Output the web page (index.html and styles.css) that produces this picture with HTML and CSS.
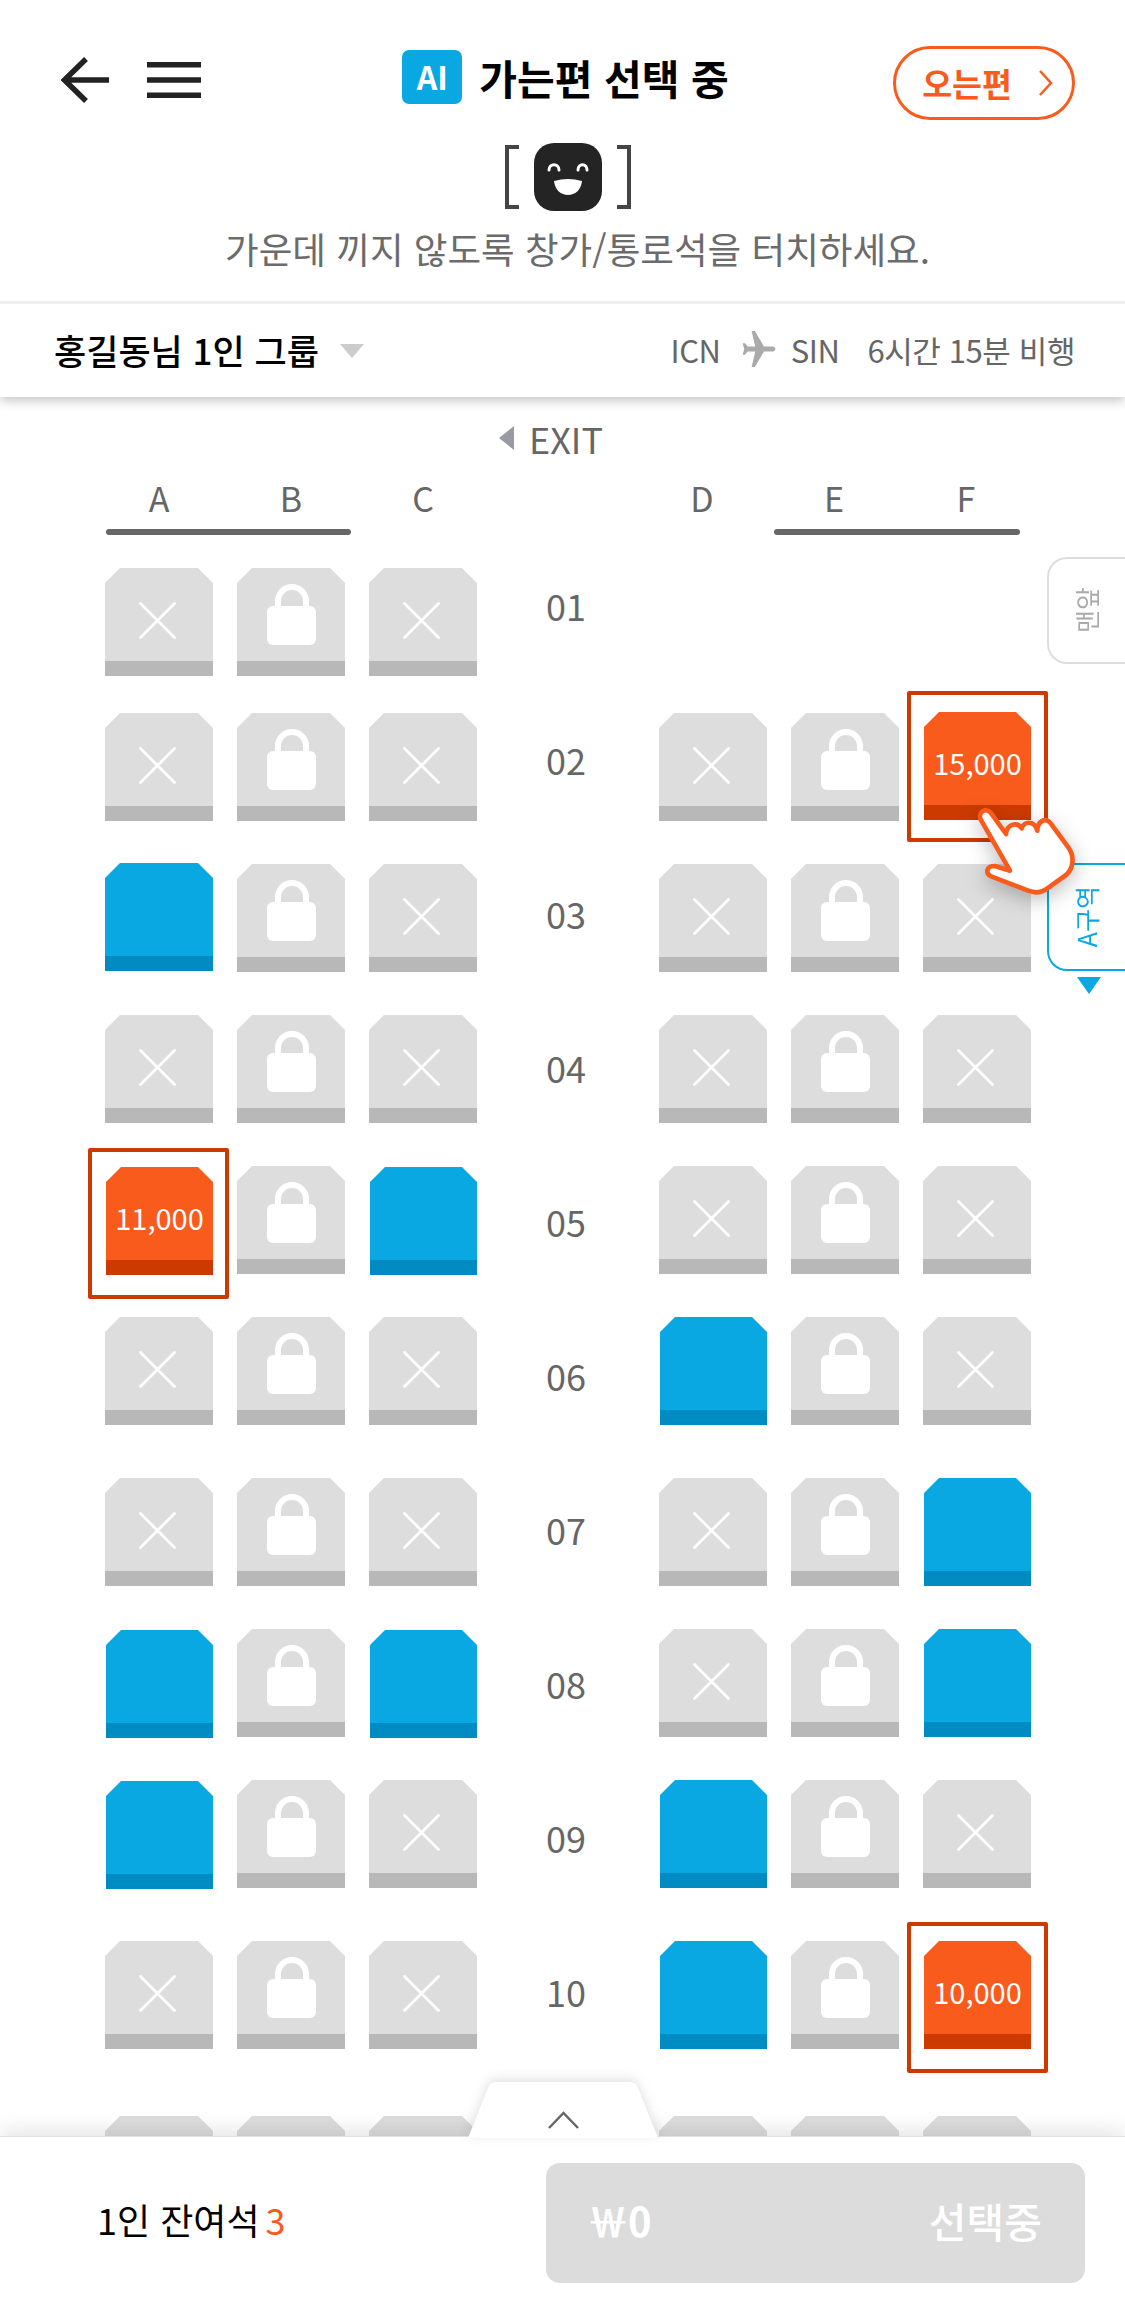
FILE: index.html
```html
<!DOCTYPE html>
<html lang="ko">
<head>
<meta charset="utf-8">
<title>좌석 선택</title>
<link rel="stylesheet" href="styles.css">
</head>
<body>
<svg class="defs" width="0" height="0" aria-hidden="true">
  <symbol id="i-x" viewBox="0 0 108 108"><path d="M35.5 35.5L69.5 69.5M69.5 35.5L35.5 69.5" fill="none" stroke="#fff" stroke-width="2.8" stroke-linecap="round"/></symbol>
  <symbol id="i-lock" viewBox="0 0 108 108"><path d="M41 40V33A14 14 0 0 1 69 33V40" fill="none" stroke="#fff" stroke-width="6"/><rect x="30" y="38" width="49" height="39" rx="6" fill="#fff"/></symbol>
</svg>
<div class="page">
  <header class="head">
    <div class="topbar">
      <div class="nav-icons">
        <svg class="icon-back" width="48" height="46" viewBox="0 0 48 46"><path d="M25 2L3.500 23L25 44M3.500 23H48" fill="none" stroke="#222" stroke-width="5.500"/></svg>
        <svg class="icon-menu" width="54" height="36" viewBox="0 0 54 36"><path d="M0 2.750H54M0 18H54M0 33.250H54" stroke="#222" stroke-width="5.500"/></svg>
      </div>
      <div class="title">
        <span class="ai-badge">AI</span>
        <h1 class="title-text">가는편 선택 중</h1>
      </div>
      <button class="return-btn">
        <span>오는편</span>
        <svg width="15" height="26" viewBox="0 0 15 26"><path d="M2 1L13 13L2 25" fill="none" stroke="#f95b1c" stroke-width="2.500"/></svg>
      </button>
    </div>
    <div class="mascot">
      <svg width="126" height="68" viewBox="0 0 126 68">
        <path d="M14 4H2V64H14M112 4H124V64H112" fill="none" stroke="#444" stroke-width="4"/>
        <rect x="29" width="68" height="68" rx="20" fill="#242424"/>
        <path d="M44 27C44 20 54 20 54 27M73 27C73 20 82 20 82 27" fill="none" stroke="#fff" stroke-width="3" stroke-linecap="round"/>
        <path d="M49 38Q63 34 77 38C76 47 70 52 63 52C56 52 50 47 49 38Z" fill="#fff"/>
      </svg>
    </div>
    <p class="hint">가운데 끼지 않도록 창가/통로석을 터치하세요.</p>
    <div class="group-row">
      <div class="group-name">홍길동님 1인 그룹<i class="caret"></i></div>
      <div class="flight">
        <span>ICN</span>
        <svg class="plane" width="36" height="36" viewBox="1.500 1 21 22"><path d="M22 12c0-.8-.7-1.500-1.500-1.500H15L9.500 1H7.500l2.200 9.500H5L3.500 8.500H2l1 3.500-1 3.500h1.500L5 13.500h4.700L7.500 23h2L15 13.500h5.500c.8 0 1.500-.7 1.500-1.500z" fill="#aaa"/></svg>
        <span>SIN</span>
        <span class="duration">6시간 15분 비행</span>
      </div>
    </div>
  </header>

  <main class="cabin">
    <div class="exit"><i class="exit-arrow"></i>EXIT</div>
    <div class="col-letters">
      <div class="col-group"><span>A</span><span>B</span><span>C</span></div>
      <div class="col-group"><span>D</span><span>E</span><span>F</span></div>
    </div>
    <div class="col-rules"><i class="rule"></i><i class="rule rule--right"></i></div>

    <div class="seat-map">
      <div class="block">
        <div class="row">
          <div class="seat"><svg class="seat-icon"><use href="#i-x"/></svg></div>
          <div class="seat"><svg class="seat-icon"><use href="#i-lock"/></svg></div>
          <div class="seat"><svg class="seat-icon"><use href="#i-x"/></svg></div>
        </div>
        <div class="row row--tight">
          <div class="seat"><svg class="seat-icon"><use href="#i-x"/></svg></div>
          <div class="seat"><svg class="seat-icon"><use href="#i-lock"/></svg></div>
          <div class="seat"><svg class="seat-icon"><use href="#i-x"/></svg></div>
        </div>
        <div class="row">
          <div class="seat seat--open seat--full nudge-up"></div>
          <div class="seat"><svg class="seat-icon"><use href="#i-lock"/></svg></div>
          <div class="seat"><svg class="seat-icon"><use href="#i-x"/></svg></div>
        </div>
        <div class="row">
          <div class="seat"><svg class="seat-icon"><use href="#i-x"/></svg></div>
          <div class="seat"><svg class="seat-icon"><use href="#i-lock"/></svg></div>
          <div class="seat"><svg class="seat-icon"><use href="#i-x"/></svg></div>
        </div>
        <div class="row">
          <div class="seat seat--selected nudge-down frame-left"><span class="seat-price">11,000</span></div>
          <div class="seat"><svg class="seat-icon"><use href="#i-lock"/></svg></div>
          <div class="seat seat--open nudge-down"></div>
        </div>
        <div class="row">
          <div class="seat"><svg class="seat-icon"><use href="#i-x"/></svg></div>
          <div class="seat"><svg class="seat-icon"><use href="#i-lock"/></svg></div>
          <div class="seat"><svg class="seat-icon"><use href="#i-x"/></svg></div>
        </div>
        <div class="row row--wide">
          <div class="seat"><svg class="seat-icon"><use href="#i-x"/></svg></div>
          <div class="seat"><svg class="seat-icon"><use href="#i-lock"/></svg></div>
          <div class="seat"><svg class="seat-icon"><use href="#i-x"/></svg></div>
        </div>
        <div class="row">
          <div class="seat seat--open nudge-down"></div>
          <div class="seat"><svg class="seat-icon"><use href="#i-lock"/></svg></div>
          <div class="seat seat--open nudge-down"></div>
        </div>
        <div class="row">
          <div class="seat seat--open nudge-down"></div>
          <div class="seat"><svg class="seat-icon"><use href="#i-lock"/></svg></div>
          <div class="seat"><svg class="seat-icon"><use href="#i-x"/></svg></div>
        </div>
        <div class="row row--wide">
          <div class="seat"><svg class="seat-icon"><use href="#i-x"/></svg></div>
          <div class="seat"><svg class="seat-icon"><use href="#i-lock"/></svg></div>
          <div class="seat"><svg class="seat-icon"><use href="#i-x"/></svg></div>
        </div>
        <div class="row row--peek"><div class="seat"></div><div class="seat"></div><div class="seat"></div></div>
      </div>

      <div class="row-labels">
        <span>01</span><span>02</span><span>03</span><span>04</span><span>05</span>
        <span>06</span><span>07</span><span>08</span><span>09</span><span>10</span>
      </div>

      <div class="block">
        <div class="row"></div>
        <div class="row row--tight">
          <div class="seat"><svg class="seat-icon"><use href="#i-x"/></svg></div>
          <div class="seat"><svg class="seat-icon"><use href="#i-lock"/></svg></div>
          <div class="seat seat--selected nudge-up frame-high"><span class="seat-price">15,000</span></div>
        </div>
        <div class="row">
          <div class="seat"><svg class="seat-icon"><use href="#i-x"/></svg></div>
          <div class="seat"><svg class="seat-icon"><use href="#i-lock"/></svg></div>
          <div class="seat"><svg class="seat-icon"><use href="#i-x"/></svg></div>
        </div>
        <div class="row">
          <div class="seat"><svg class="seat-icon"><use href="#i-x"/></svg></div>
          <div class="seat"><svg class="seat-icon"><use href="#i-lock"/></svg></div>
          <div class="seat"><svg class="seat-icon"><use href="#i-x"/></svg></div>
        </div>
        <div class="row">
          <div class="seat"><svg class="seat-icon"><use href="#i-x"/></svg></div>
          <div class="seat"><svg class="seat-icon"><use href="#i-lock"/></svg></div>
          <div class="seat"><svg class="seat-icon"><use href="#i-x"/></svg></div>
        </div>
        <div class="row">
          <div class="seat seat--open"></div>
          <div class="seat"><svg class="seat-icon"><use href="#i-lock"/></svg></div>
          <div class="seat"><svg class="seat-icon"><use href="#i-x"/></svg></div>
        </div>
        <div class="row row--wide">
          <div class="seat"><svg class="seat-icon"><use href="#i-x"/></svg></div>
          <div class="seat"><svg class="seat-icon"><use href="#i-lock"/></svg></div>
          <div class="seat seat--open"></div>
        </div>
        <div class="row">
          <div class="seat"><svg class="seat-icon"><use href="#i-x"/></svg></div>
          <div class="seat"><svg class="seat-icon"><use href="#i-lock"/></svg></div>
          <div class="seat seat--open"></div>
        </div>
        <div class="row">
          <div class="seat seat--open"></div>
          <div class="seat"><svg class="seat-icon"><use href="#i-lock"/></svg></div>
          <div class="seat"><svg class="seat-icon"><use href="#i-x"/></svg></div>
        </div>
        <div class="row row--wide">
          <div class="seat seat--open"></div>
          <div class="seat"><svg class="seat-icon"><use href="#i-lock"/></svg></div>
          <div class="seat seat--selected"><span class="seat-price">10,000</span></div>
        </div>
        <div class="row row--peek"><div class="seat"></div><div class="seat"></div><div class="seat"></div></div>
      </div>
    </div>
  </main>

  <div class="zone-tab zone-tab--front"><span>맨앞</span></div>
  <div class="zone-tab zone-tab--active"><span>A구역</span></div>
  <i class="zone-arrow"></i>

  <svg class="hand" width="165" height="150" viewBox="0 0 495 450">
    <path d="M150 332L64 182C50 160 75 140 92 158L138 222C140 195 170 182 185 205C190 185 222 178 232 212C232 185 255 170 272 190L325 262C345 290 340 325 318 345L262 385C245 398 225 400 205 392L95 350C75 340 78 318 105 318Z" fill="#fff" stroke="#f95b1c" stroke-width="14" stroke-linejoin="round"/>
  </svg>

  <footer class="footer">
    <svg class="footer-tab" width="190" height="56" viewBox="0 0 190 56">
      <path d="M0 56L20 6Q22 0 28 0H162Q168 0 170 6L190 56Z" fill="#fff"/>
      <path d="M81 46L95.500 31L110 46" fill="none" stroke="#666" stroke-width="2.500"/>
    </svg>
    <div class="remain">1인 잔여석<b class="remain-count">3</b></div>
    <button class="pay-btn"><span class="pay-price">￦0</span><span class="pay-label">선택중</span></button>
  </footer>
</div>
</body>
</html>
```

FILE: styles.css
```css
* { box-sizing: border-box; }
html, body { margin: 0; padding: 0; background: #fff; }
body { font-family: "Noto Sans CJK KR", "Noto Sans", sans-serif; color: #000; }
.defs { position: absolute; }
.page { position: relative; height: 2306px; overflow: hidden; background: #fff; }

/* header */
.head { position: relative; z-index: 3; background: #fff; box-shadow: 0 4px 10px rgba(0, 0, 0, .22); }
.topbar { display: grid; grid-template-columns: 1fr auto 1fr; align-items: start; padding: 46px 55px 0 61px; height: 119px; }
.nav-icons { display: flex; align-items: flex-start; gap: 38px; }
.icon-back { margin-top: 11px; }
.icon-menu { margin-top: 16px; }
.title { display: flex; align-items: center; gap: 17px; margin-top: 4px; }
.ai-badge { width: 60px; height: 54px; border-radius: 7px; background: #0aa8e2; color: #fff; font-size: 32px; font-weight: 700; line-height: 52px; text-align: center; }
.title-text { margin: 0; font-size: 41px; font-weight: 700; line-height: 54px; white-space: nowrap; }
.return-btn { justify-self: end; display: flex; align-items: center; justify-content: center; gap: 26px; width: 182px; height: 74px; margin-right: -5px; padding: 0 0 0 7px; border: 3px solid #f95b1c; border-radius: 37px; background: #fff; color: #f95b1c; font: 700 32.500px/1 "Noto Sans CJK KR", sans-serif; }
.mascot { display: flex; justify-content: center; margin-top: 24px; padding-left: 11px; }
.mascot svg { display: block; }
.hint { margin: 13px 0 0; padding-left: 30px; color: #6b6b6b; font-size: 36.6px; line-height: 50px; text-align: center; white-space: nowrap; }
.group-row { display: flex; align-items: center; justify-content: space-between; height: 96px; margin-top: 27px; padding: 0 50px 3px 54px; border-top: 3px solid #eee; }
.group-name { display: flex; align-items: center; font-size: 35px; font-weight: 500; }
.caret { width: 0; height: 0; margin: 3px 0 0 21px; border-style: solid; border-width: 14px 12px 0; border-color: #ccc transparent transparent; }
.flight { display: flex; align-items: center; color: #666; font-size: 31px; letter-spacing: -.4px; }
.plane { margin: 0 14px 0 20px; }
.duration { margin-left: 28px; }

/* cabin */
.cabin { position: relative; }
.exit { display: flex; align-items: center; justify-content: center; height: 40px; margin-top: 21px; padding-right: 23px; color: #666; font-size: 36px; line-height: 40px; }
.exit-arrow { width: 0; height: 0; margin-right: 15px; border-style: solid; border-width: 12px 15px 12px 0; border-color: transparent #9a9aa5 transparent transparent; }
.col-letters { display: flex; gap: 147px; margin-top: 20px; padding-left: 93px; color: #666; font-size: 34px; line-height: 40px; }
.col-group { display: flex; }
.col-group span { width: 132px; text-align: center; }
.col-rules { display: flex; margin-top: 11px; padding-left: 106px; }
.rule { width: 245px; height: 6px; border-radius: 3px; background: #666; }
.rule--right { width: 246px; margin-left: 423px; }
.seat-map { display: flex; margin-top: 33px; padding-left: 105px; }
.block { width: 372px; flex: none; }
.row { display: flex; align-items: flex-start; gap: 24px; height: 108px; margin-top: 43px; }
.row:first-child { margin-top: 0; }
.row--tight { margin-top: 37px; }
.row--wide { margin-top: 53px; }
.row--peek { margin-top: 67px; }
.row-labels { display: flex; flex-direction: column; width: 182px; flex: none; margin-top: -40px; padding-right: 4px; color: #666; font-size: 36px; line-height: 154px; text-align: center; }

.seat { --seat: #ddd; --base: #b8b8b8; position: relative; width: 108px; height: 108px; flex: none; }
.seat::before { content: ""; position: absolute; inset: 0; background: linear-gradient(var(--seat) 93px, var(--base) 93px); clip-path: polygon(15px 0, calc(100% - 15px) 0, 100% 15px, 100% 100%, 0 100%, 0 15px); }
.seat-icon { position: relative; display: block; width: 108px; height: 108px; }
.seat--open { --seat: #0aa8e2; --base: #008bc2; width: 107px; margin-left: 1px; }
.seat--full { width: 108px; margin-left: 0; }
.seat--selected { --seat: #f95b1c; --base: #cc3a00; width: 107px; margin-left: 1px; }
.seat--selected::after { content: ""; position: absolute; inset: -19px -17px -24px; border: 4px solid #cc3a00; border-radius: 2px; }
.frame-left::after { left: -18px; right: -16px; }
.frame-high::after { top: -21px; bottom: -22px; }
.nudge-up { margin-top: -1px; }
.nudge-down { margin-top: 1px; }
.seat-price { position: relative; display: block; color: #fff; font-size: 29px; line-height: 101px; text-align: center; }

/* side tabs */
.zone-tab { position: absolute; left: 1047px; z-index: 1; display: flex; align-items: center; justify-content: center; width: 90px; height: 107px; padding-right: 14px; border: 2px solid #ddd; border-right: 0; border-radius: 20px 0 0 20px; background: #fff; color: #aaa; font-size: 25px; line-height: 1; }
.zone-tab span { writing-mode: vertical-rl; text-orientation: sideways; transform: rotate(180deg); white-space: nowrap; }
.zone-tab--front { top: 557px; }
.zone-tab--active { top: 863px; height: 108px; border-color: #0aa8e2; color: #0aa8e2; }
.zone-arrow { position: absolute; top: 977px; left: 1077px; z-index: 1; width: 0; height: 0; border-style: solid; border-width: 17px 12px 0; border-color: #0aa8e2 transparent transparent; }

.hand { position: absolute; top: 760px; left: 960px; z-index: 2; filter: drop-shadow(0 6px 10px rgba(0, 0, 0, .25)); }

/* footer */
.footer { position: absolute; left: 0; right: 0; bottom: 0; z-index: 4; display: flex; align-items: flex-start; height: 170px; border-top: 1px solid #e2e2e2; background: #fff; box-shadow: 0 -4px 22px rgba(0, 0, 0, .12); }
.footer-tab { position: absolute; top: -55px; left: 468px; filter: drop-shadow(0 -3px 6px rgba(0, 0, 0, .12)); }
.remain { display: flex; margin-top: 56px; padding-left: 97px; font-size: 36px; line-height: 52px; white-space: nowrap; }
.remain-count { margin-left: 6px; color: #f95b1c; font-weight: 400; }
.pay-btn { display: flex; align-items: center; justify-content: space-between; width: 539px; height: 120px; margin: 26px 40px 0 auto; padding: 0 43px 6px 42px; border: 0; border-radius: 14px; background: #dcdcdc; color: #fff; font-family: "Noto Sans CJK KR", sans-serif; }
.pay-price { font-size: 40px; font-weight: 700; }
.pay-label { font-size: 41px; font-weight: 500; }
```
